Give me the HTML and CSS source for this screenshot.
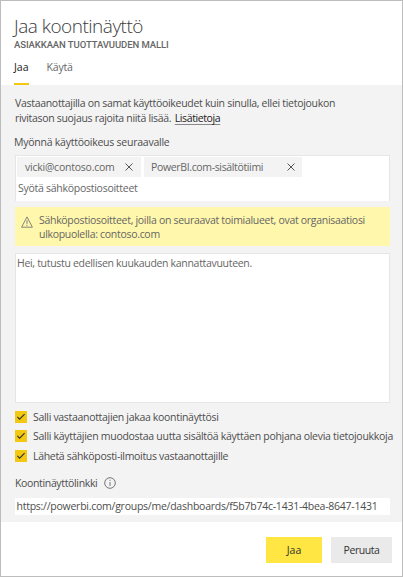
FILE: index.html
```html
<!DOCTYPE html>
<html lang="fi">
<head>
<meta charset="utf-8">
<title>Jaa koontinäyttö</title>
<link rel="stylesheet" href="styles.css">
</head>
<body>
<main class="dialog">
  <header class="header">
    <h1 class="title">Jaa koontinäyttö</h1>
    <p class="subtitle">ASIAKKAAN TUOTTAVUUDEN MALLI</p>
    <nav class="tabs">
      <span class="tab tab-active">Jaa</span>
      <span class="tab">Käytä</span>
    </nav>
  </header>
  <section class="content">
    <p class="intro">Vastaanottajilla on samat käyttöoikeudet kuin sinulla, ellei tietojoukon<br><span class="snug">rivitason suojaus rajoita niitä lisää. </span><a class="more">Lisätietoja</a></p>
    <p class="label grant-label">Myönnä käyttöoikeus seuraavalle</p>
    <div class="recipients">
      <div class="chips">
        <span class="chip chip-mail"><span class="loose">vicki@contoso.com</span><svg class="close" viewBox="0 0 8 8"><path d="M.5.5l7 7M7.5.5l-7 7"/></svg></span>
        <span class="chip chip-team"><span class="tight">PowerBI.com-sisältötiimi</span><svg class="close" viewBox="0 0 8 8"><path d="M.5.5l7 7M7.5.5l-7 7"/></svg></span>
      </div>
      <p class="placeholder">Syötä sähköpostiosoitteet</p>
    </div>
    <div class="warning">
      <svg class="warning-icon" viewBox="0 0 12 12"><path d="M6 .9L11.4 11.2H.6zM6 4.2v3.7M6 8.8v1.1"/></svg>
      <p>Sähköpostiosoitteet, joilla on seuraavat toimialueet, ovat organisaatiosi<br>ulkopuolella: contoso.com</p>
    </div>
    <div class="message snug">Hei, tutustu edellisen kuukauden kannattavuuteen.</div>
    <div class="options">
      <div class="option"><svg class="check" viewBox="0 0 12 12"><path d="M2.3 5.9l2.3 2.3 5-5"/></svg><span class="snug">Salli vastaanottajien jakaa koontinäyttösi</span></div>
      <div class="option"><svg class="check" viewBox="0 0 12 12"><path d="M2.3 5.9l2.3 2.3 5-5"/></svg><span class="wide">Salli käyttäjien muodostaa uutta sisältöä käyttäen pohjana olevia tietojoukkoja</span></div>
      <div class="option option-last"><svg class="check" viewBox="0 0 12 12"><path d="M2.3 5.9l2.3 2.3 5-5"/></svg><span class="snug">Lähetä sähköposti-ilmoitus vastaanottajille</span></div>
    </div>
    <div class="link-label"><span class="tight">Koontinäyttölinkki</span><svg class="info" viewBox="0 0 12 12"><circle cx="6" cy="6" r="5.3"/><path d="M6 5v4M6 2.8v1.1"/></svg></div>
    <div class="url">https://powerbi.com/groups/me/dashboards/f5b7b74c-1431-4bea-8647-1431</div>
  </section>
  <footer class="footer">
    <button class="button button-primary">Jaa</button>
    <button class="button">Peruuta</button>
  </footer>
</main>
</body>
</html>
```
FILE: styles.css
```css
* { box-sizing: border-box; }
body {
  margin: 0;
  font: 10.5px/15px "Open Sans", "Noto Sans", sans-serif;
  letter-spacing: -0.298px;
  color: #4d4d4d;
  background: #fff;
}
h1, p { margin: 0; font-weight: 400; }
svg { display: block; flex: none; fill: none; }
.dialog {
  width: 403px;
  height: 577px;
  display: flex;
  flex-direction: column;
  border: 1px solid #bdbdbd;
}
.header { height: 84px; padding: 13px 13px 0; display: flex; flex-direction: column; }
.title { font-size: 19px; font-weight: 300; line-height: 25px; letter-spacing: -0.5px; color: #3a3a3a; }
.subtitle { font: 500 9.5px/11px Roboto, sans-serif; letter-spacing: -0.08px; color: #666; }
.tabs { display: flex; gap: 17.5px; margin-top: auto; letter-spacing: -0.18px; color: #666; }
.tab { height: 26px; line-height: 16px; border-bottom: 2px solid transparent; }
.tab-active { width: 15px; letter-spacing: 0; color: #222; border-color: #f2c811; }

.content { height: 437px; padding: 11px 12px 0 14px; background: #f3f3f3; }
.more { margin-left: 1px; letter-spacing: -0.39px; color: #222; text-decoration: underline; text-decoration-color: #888; text-underline-offset: 2px; text-decoration-skip-ink: none; }
.snug { letter-spacing: -0.312px; }
.tight { letter-spacing: -0.35px; }
.loose { letter-spacing: -0.232px; }
.wide { letter-spacing: -0.281px; white-space: nowrap; }
.grant-label { margin: 9px 0 5px -1px; letter-spacing: -0.243px; }
.recipients {
  height: 46px;
  padding: 1px;
  border: 1px solid #e6e6e6;
  border-bottom: 0;
  background: #fff;
  color: #666;
}
.chips { display: flex; gap: 3px; }
.chip { height: 20px; display: flex; align-items: center; justify-content: space-between; background: #f3f3f3; }
.chip-mail { width: 124px; padding: 0 8px; }
.chip-team { width: 158px; padding: 0 7px; }
.close { width: 8px; height: 8px; stroke: #555; stroke-width: 1; }
.placeholder { padding: 4px 1px 0; letter-spacing: -0.267px; }
.warning {
  height: 39px;
  margin-top: 6px;
  padding: 6px 0 0 6px;
  display: flex;
  gap: 6px;
  background: #fff7ab;
  color: #666;
  line-height: 14px;
}
.warning-icon { width: 12px; height: 12px; margin-top: 3px; stroke: #777; stroke-width: 0.9; }
.message { height: 150px; margin-top: 7px; padding: 2px 1px; border: 1px solid #e6e6e6; background: #fff; color: #666; }
.options { margin-top: 5px; }
.option { height: 18px; display: flex; gap: 6px; align-items: center; margin-bottom: 1px; }
.option-last { margin: 2px 0 0; }
.check { width: 12px; height: 12px; background: #f2c811; stroke: #333; stroke-width: 1.1; }
.link-label { display: flex; align-items: center; gap: 7px; height: 16px; margin-top: 10px; }
.info { width: 12px; height: 12px; stroke: #666; stroke-width: 0.9; }
.url { height: 17px; margin-top: 7px; padding-left: 1.5px; line-height: 16px; letter-spacing: -0.248px; background: #fff; }

.footer { display: flex; justify-content: flex-end; gap: 9px; padding: 15px 10px 0 0; }
.button {
  width: 61px;
  height: 26px;
  padding: 0;
  border: 0;
  background: #eaeaea;
  color: #333;
  font: inherit;
  letter-spacing: -0.45px;
}
.button-primary { width: 56px; background: #ffe642; letter-spacing: 0; }
```
